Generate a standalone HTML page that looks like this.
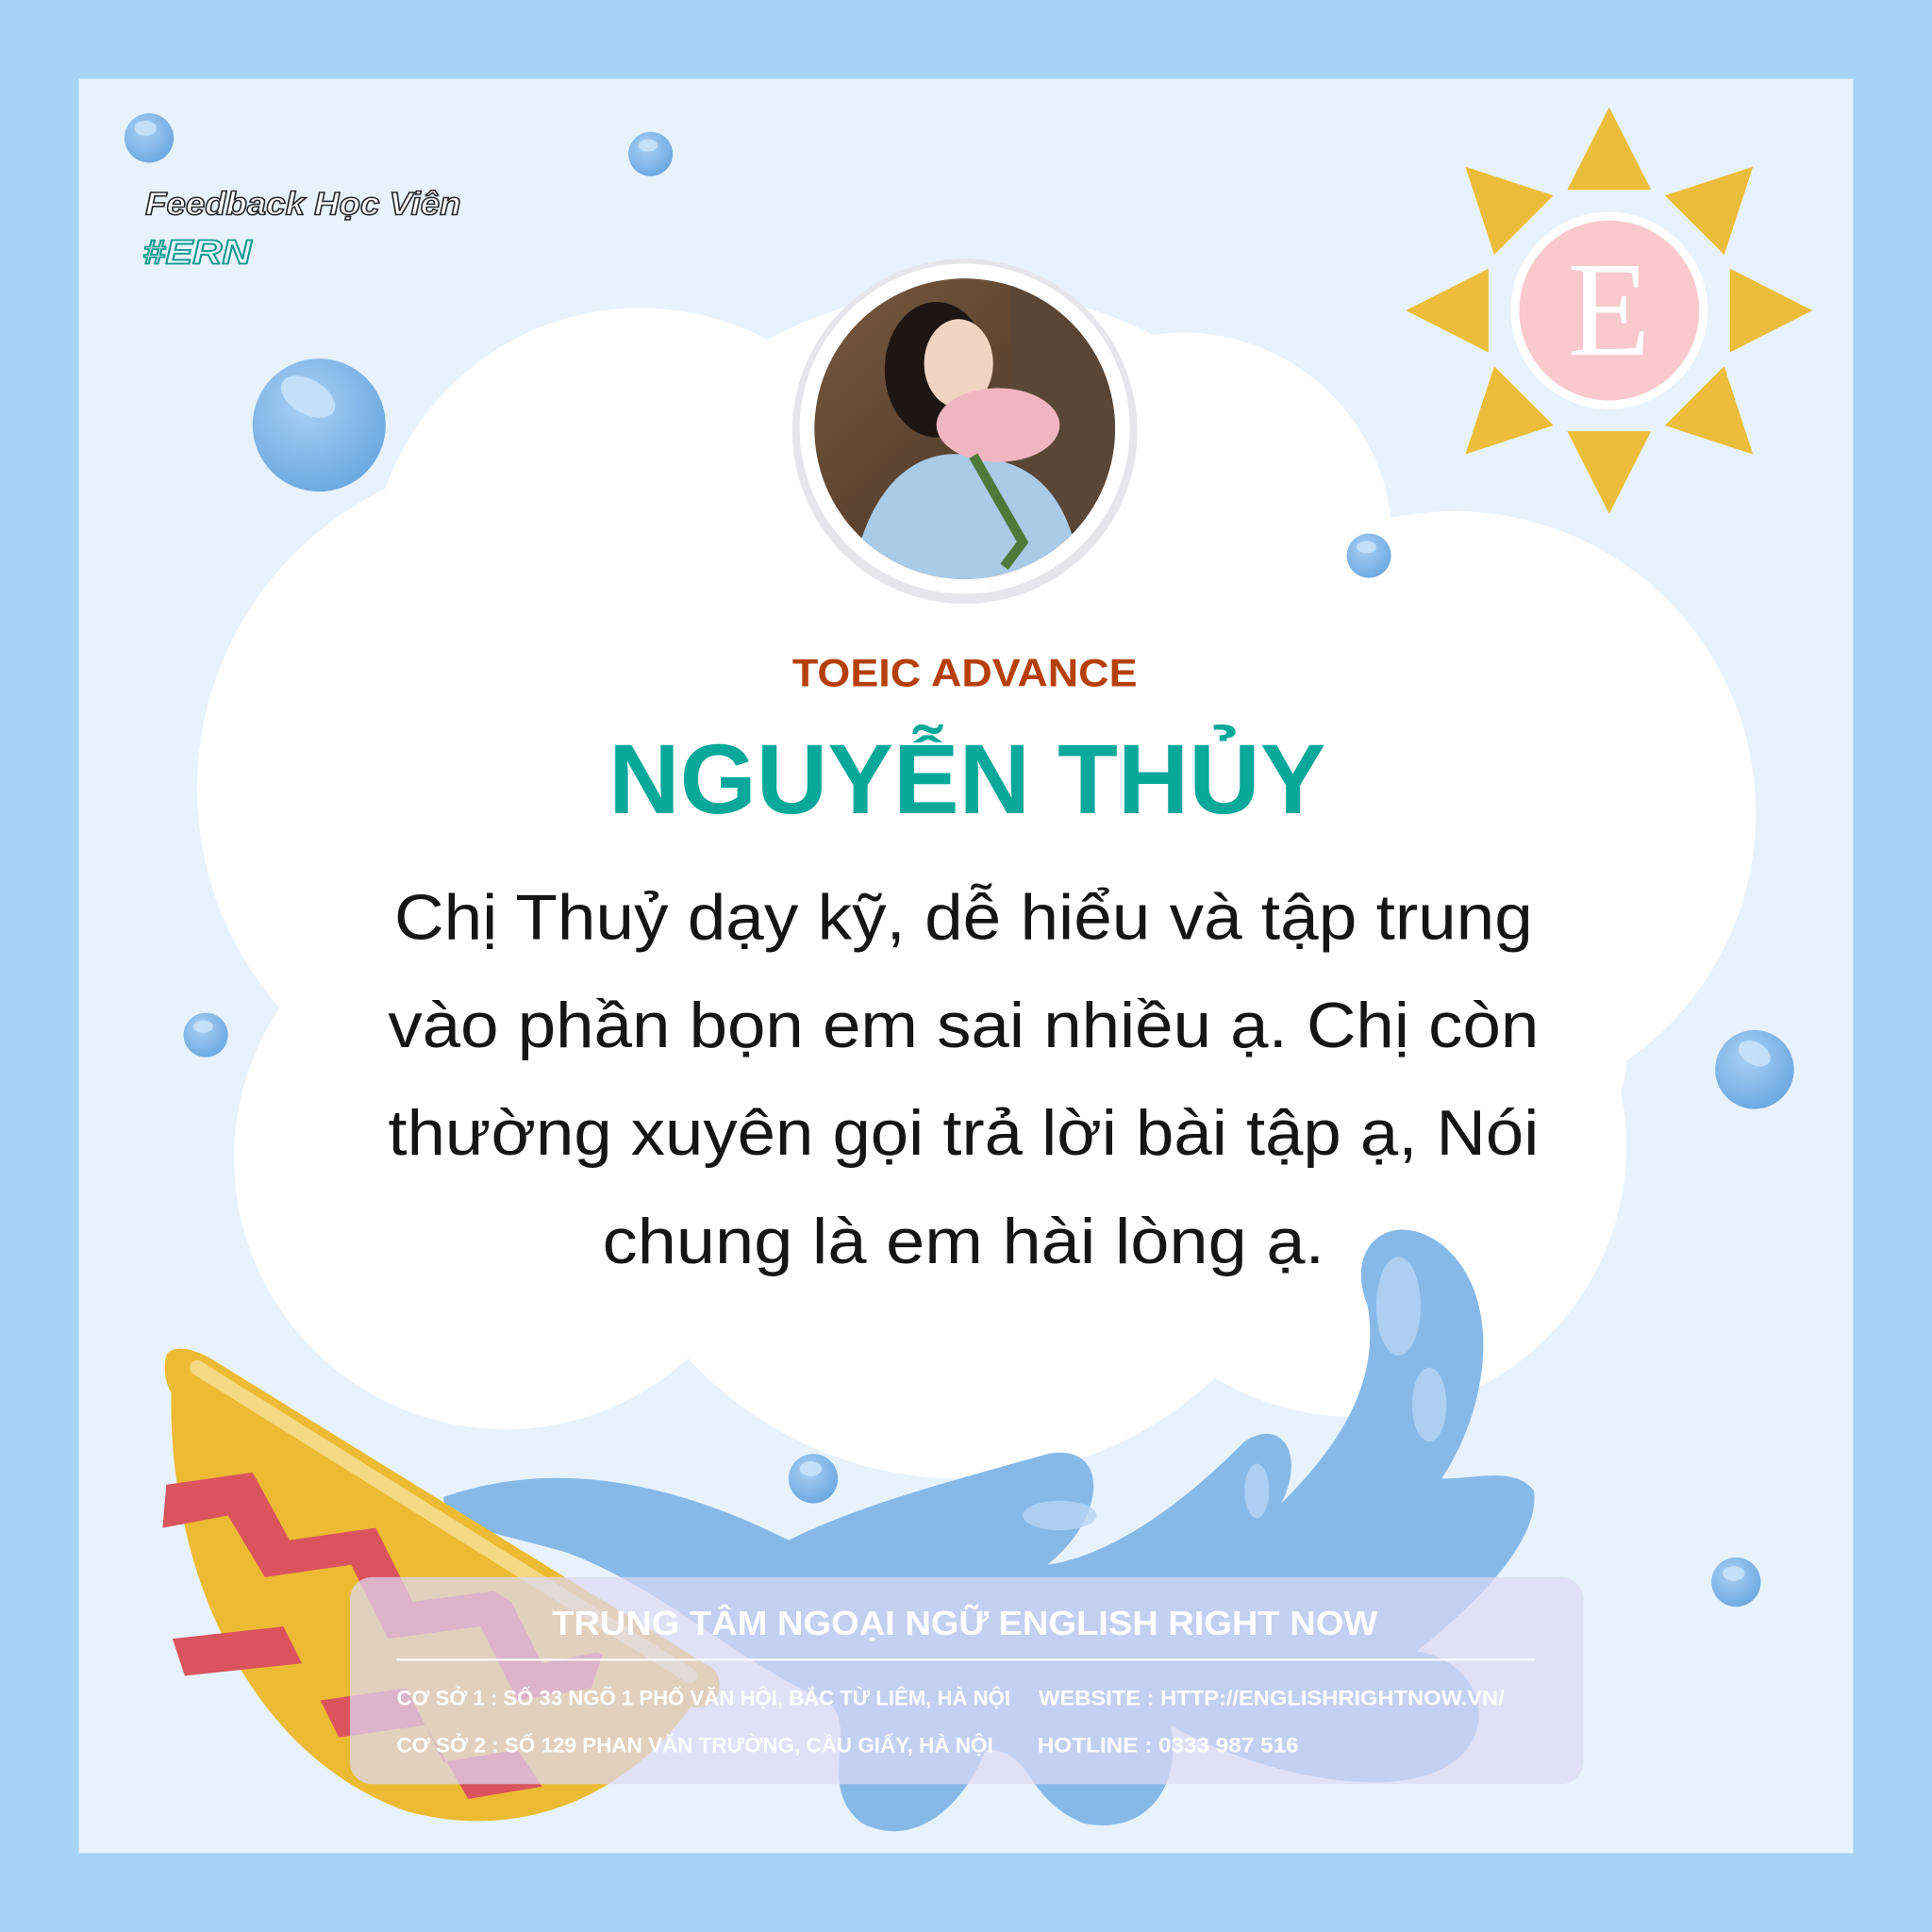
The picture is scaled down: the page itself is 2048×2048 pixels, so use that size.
<!DOCTYPE html>
<html><head><meta charset="utf-8"><style>
html,body{margin:0;padding:0;background:#a6d3f3}
svg{display:block}
</style></head><body>
<svg width="2048" height="2048" viewBox="0 0 1568 1568" xmlns="http://www.w3.org/2000/svg">
<defs>
<radialGradient id="bub" cx="0.4" cy="0.35" r="0.7"><stop offset="0" stop-color="#a9d0f5"/><stop offset="1" stop-color="#6aa7e0"/></radialGradient>
<clipPath id="av"><circle cx="783" cy="348" r="122"/></clipPath>
<linearGradient id="ph" x1="0" y1="0" x2="1" y2="1"><stop offset="0" stop-color="#7a5a3e"/><stop offset="1" stop-color="#3c2c22"/></linearGradient>
</defs>
<rect width="1568" height="1568" fill="#a6d3f3"/>
<rect x="64" y="64" width="1440" height="1440" fill="#e8f2fd"/>
<!-- cloud -->
<g fill="#fff">
<circle cx="783" cy="570" r="335"/>
<circle cx="430" cy="640" r="270"/>
<circle cx="1180" cy="660" r="245"/>
<circle cx="410" cy="940" r="220"/>
<circle cx="780" cy="900" r="300"/>
<circle cx="1100" cy="930" r="220"/>
<circle cx="1240" cy="860" r="80"/>
<circle cx="960" cy="440" r="170"/>
<circle cx="520" cy="470" r="220"/>
</g>
<!-- sun -->
<g fill="#ecbd3a" transform="translate(1306,252)">
<g id="ray"><polygon points="-34,-98 34,-98 0,-165"/></g>
<use href="#ray" transform="rotate(45)"/><use href="#ray" transform="rotate(90)"/><use href="#ray" transform="rotate(135)"/>
<use href="#ray" transform="rotate(180)"/><use href="#ray" transform="rotate(225)"/><use href="#ray" transform="rotate(270)"/><use href="#ray" transform="rotate(315)"/>
<circle r="80" fill="#fff"/>
<circle r="73" fill="#f9c9cd"/>
<text x="0" y="36" text-anchor="middle" font-family="Liberation Serif,serif" font-size="110" fill="#fff">E</text>
</g>
<!-- splash -->
<g fill="#87b9e8">
<path d="M360,1215 C460,1180 560,1210 640,1250 C700,1220 780,1200 850,1180 C900,1170 900,1230 850,1270 C920,1260 990,1190 1010,1170 C1040,1150 1060,1180 1040,1220 C1090,1170 1120,1120 1110,1060 C1090,1010 1130,980 1170,1010 C1220,1050 1210,1140 1170,1200 C1200,1200 1230,1190 1245,1210 C1250,1250 1200,1300 1150,1340 C1210,1350 1220,1420 1160,1440 C1100,1460 1000,1430 950,1400 C960,1450 930,1490 880,1480 C830,1460 840,1420 800,1420 C780,1470 740,1500 700,1480 C660,1450 700,1400 670,1380 C600,1350 540,1290 460,1260 C410,1245 360,1240 360,1215 Z"/>
</g>
<g fill="#b6d5f3" opacity="0.8">
<ellipse cx="1135" cy="1060" rx="18" ry="40"/>
<ellipse cx="1160" cy="1140" rx="14" ry="30"/>
<ellipse cx="1020" cy="1210" rx="10" ry="22"/>
<ellipse cx="860" cy="1230" rx="30" ry="12"/>
</g>
<!-- bowl -->
<path d="M140,1110 C130,1250 190,1420 330,1470 C440,1500 530,1440 570,1370 Z" fill="#ecbb33"/>
<path d="M135,1205 L205,1195 L235,1250 L305,1240 L335,1300 L410,1290 L440,1350 L490,1340 L480,1370 L420,1380 L390,1320 L315,1330 L285,1270 L215,1280 L185,1230 L132,1240 Z" fill="#d9545c"/>
<path d="M140,1330 L230,1320 L260,1380 L330,1370 L360,1430 L420,1420 L440,1450 L380,1460 L345,1400 L275,1410 L245,1350 L150,1360 Z" fill="#d9545c"/>
<path d="M135,1100 C130,1120 140,1140 160,1150 L560,1385 C580,1390 590,1370 580,1355 L175,1105 C160,1095 140,1090 135,1100 Z" fill="#ecbb33"/>
<path d="M160,1110 L560,1360" stroke="#f5d985" stroke-width="12" stroke-linecap="round"/>
<!-- bubbles -->
<g fill="url(#bub)">
<circle cx="121" cy="112" r="20"/><circle cx="528" cy="125" r="18"/><circle cx="259" cy="345" r="54"/>
<circle cx="1111" cy="451" r="18"/><circle cx="167" cy="840" r="18"/><circle cx="1424" cy="868" r="32"/>
<circle cx="660" cy="1200" r="20"/><circle cx="1409" cy="1284" r="20"/>
</g>
<g fill="#cfe5fa" opacity="0.8">
<ellipse cx="118" cy="104" rx="9" ry="6"/><ellipse cx="526" cy="118" rx="8" ry="5"/><ellipse cx="250" cy="322" rx="24" ry="14" transform="rotate(30 250 322)"/>
<ellipse cx="1109" cy="444" rx="8" ry="5"/><ellipse cx="165" cy="833" rx="8" ry="5"/><ellipse cx="1424" cy="855" rx="14" ry="9" transform="rotate(30 1424 855)"/>
<ellipse cx="658" cy="1192" rx="9" ry="6"/><ellipse cx="1407" cy="1277" rx="9" ry="6"/>
</g>
<!-- avatar -->
<circle cx="783" cy="350" r="140" fill="#e6e6ea"/>
<circle cx="783" cy="348" r="134" fill="#fff"/>
<g clip-path="url(#av)">
<rect x="650" y="220" width="270" height="260" fill="url(#ph)"/>
<rect x="820" y="230" width="90" height="200" fill="#5a4636"/>
<ellipse cx="760" cy="300" rx="42" ry="55" fill="#1e1612"/>
<ellipse cx="778" cy="295" rx="28" ry="36" fill="#f1d4c2"/>
<path d="M690,480 C700,400 740,360 790,370 C840,375 870,400 880,480 Z" fill="#a9cbe8"/>
<ellipse cx="810" cy="345" rx="50" ry="30" fill="#f0b6c0"/>
<path d="M790,370 L830,440 L815,460" stroke="#4c7a3a" stroke-width="8" fill="none"/>
</g>
<!-- texts -->
<text x="118" y="174" font-family="Liberation Sans,sans-serif" font-style="italic" font-weight="bold" font-size="26" fill="#fff" stroke="#2a2a2a" stroke-width="1.2" textLength="256" lengthAdjust="spacingAndGlyphs">Feedback Học Viên</text>
<text x="116" y="214" font-family="Liberation Sans,sans-serif" font-style="italic" font-weight="bold" font-size="28" fill="#e8f2fd" stroke="#0c9a8c" stroke-width="1.4" textLength="88" lengthAdjust="spacingAndGlyphs">#ERN</text>
<text x="783" y="557" text-anchor="middle" font-family="Liberation Sans,sans-serif" font-weight="bold" font-size="32" fill="#b5400e" textLength="280" lengthAdjust="spacingAndGlyphs">TOEIC ADVANCE</text>
<text x="785" y="660" text-anchor="middle" font-family="Liberation Sans,sans-serif" font-weight="bold" font-size="80" fill="#0aa89a" textLength="582" lengthAdjust="spacingAndGlyphs">NGUYỄN THỦY</text>
<g font-family="Liberation Sans,sans-serif" font-size="52" fill="#151515" text-anchor="middle">
<text x="782" y="762" textLength="924" lengthAdjust="spacingAndGlyphs">Chị Thuỷ dạy kỹ, dễ hiểu và tập trung</text>
<text x="782" y="850" textLength="934" lengthAdjust="spacingAndGlyphs">vào phần bọn em sai nhiều ạ. Chị còn</text>
<text x="782" y="937" textLength="934" lengthAdjust="spacingAndGlyphs">thường xuyên gọi trả lời bài tập ạ, Nói</text>
<text x="782" y="1025" textLength="586" lengthAdjust="spacingAndGlyphs">chung là em hài lòng ạ.</text>
</g>
<!-- footer -->
<rect x="284" y="1280" width="1001" height="168" rx="18" fill="#dcd8f4" opacity="0.72"/>
<text x="783" y="1327" text-anchor="middle" font-family="Liberation Sans,sans-serif" font-weight="bold" font-size="28" fill="#fff" textLength="670" lengthAdjust="spacingAndGlyphs">TRUNG TÂM NGOẠI NGỮ ENGLISH RIGHT NOW</text>
<line x1="322" y1="1347" x2="1246" y2="1347" stroke="#fff" stroke-width="1.5"/>
<g font-family="Liberation Sans,sans-serif" font-weight="bold" font-size="17" fill="#fff">
<text x="322" y="1384" textLength="498" lengthAdjust="spacingAndGlyphs">CƠ SỞ 1 : SỐ 33 NGÕ 1 PHỐ VĂN HỘI, BẮC TỪ LIÊM, HÀ NỘI</text>
<text x="843" y="1384" textLength="378" lengthAdjust="spacingAndGlyphs">WEBSITE : HTTP://ENGLISHRIGHTNOW.VN/</text>
<text x="322" y="1422" textLength="484" lengthAdjust="spacingAndGlyphs">CƠ SỞ 2 : SỐ 129 PHAN VĂN TRƯỜNG, CẦU GIẤY, HÀ NỘI</text>
<text x="842" y="1422" textLength="212" lengthAdjust="spacingAndGlyphs">HOTLINE : 0333 987 516</text>
</g>
</svg>
</body></html>
